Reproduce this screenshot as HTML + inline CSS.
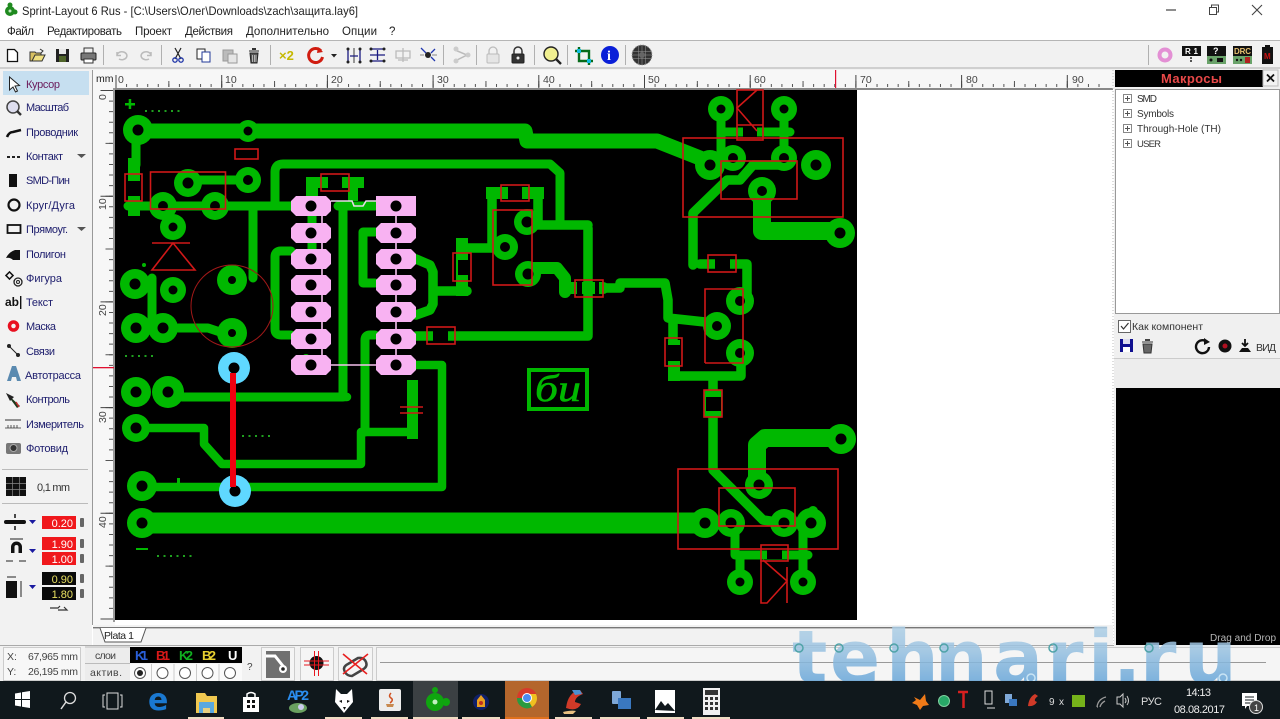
<!DOCTYPE html>
<html><head><meta charset="utf-8"><title>Sprint-Layout 6 Rus</title>
<style>html,body{margin:0;padding:0;background:#fff;width:1280px;height:719px;overflow:hidden}svg{display:block;filter:blur(.3px)}text{font-family:"Liberation Sans","DejaVu Sans",sans-serif}</style></head>
<body>
<svg xmlns="http://www.w3.org/2000/svg" width="1280" height="719" viewBox="0 0 1280 719">
<defs>
<linearGradient id="wm" gradientUnits="userSpaceOnUse" x1="0" y1="620" x2="0" y2="682"><stop offset="0" stop-color="#b4d3e8"/><stop offset=".45" stop-color="#9cc4e2"/><stop offset="1" stop-color="#68a6d8"/></linearGradient>
<path id="pd" d="M-15-10H15L20-5V5L15 10H-15L-20 5V-5Z" fill="#f8b2f2"/>
</defs>
<rect width="1280" height="719" fill="#fff"/>
<!-- title -->
<circle cx="10" cy="11" r="5" fill="#1f8a1f"/><circle cx="10" cy="5" r="2.5" fill="#1f8a1f"/><circle cx="15" cy="12" r="2.5" fill="#1f8a1f"/><circle cx="10" cy="11" r="1.5" fill="#bfe8bf"/>
<text x="22" y="15" font-size="12" fill="#222" textLength="336" lengthAdjust="spacingAndGlyphs">Sprint-Layout 6 Rus - [C:\Users\Олег\Downloads\zach\защита.lay6]</text>
<g font-size="11.5" fill="#222" lengthAdjust="spacingAndGlyphs">
<text x="7" y="35" textLength="27">Файл</text><text x="47" y="35" textLength="75">Редактировать</text><text x="135" y="35" textLength="37">Проект</text><text x="185" y="35" textLength="48">Действия</text><text x="246" y="35" textLength="83">Дополнительно</text><text x="342" y="35" textLength="35">Опции</text><text x="389" y="35">?</text>
</g>
<path d="M1166 10h10" stroke="#444" stroke-width="1.2"/>
<path d="M1209.500 7.500h7v7h-7zM1211.500 7.500v-2.500h7v7h-2" fill="none" stroke="#444"/>
<path d="M1252 5l10 10M1262 5l-10 10" stroke="#444" stroke-width="1.1"/>
<!-- toolbar -->
<rect x="0" y="40" width="1280" height="30" fill="#f1f1f1"/>
<rect x="0" y="40" width="1280" height="1" fill="#b5b5b5"/>
<rect x="0" y="67" width="1280" height="2" fill="#cfcfcf"/>
<g stroke="#b0b0b0"><path d="M103.500 45v20M161.500 45v20M270.500 45v20M443.500 45v20M476.500 45v20M534.500 45v20M567.500 45v20M625.500 45v20M1148.500 45v20"/></g>
<path d="M7.500 49.500h7l3 3v9h-10z" fill="#fff" stroke="#111" stroke-width="1.300"/>
<path d="M30 61v-9h5l1 1h5v8z" fill="#d8c060" stroke="#333"/><path d="M32 61l3-6h10l-3 6z" fill="#f0e080" stroke="#333"/><path d="M40 49l3 2-2 2" fill="none" stroke="#333"/>
<rect x="56" y="49" width="13" height="13" fill="#222"/><rect x="59" y="49" width="7" height="5" fill="#e8e8e8"/><rect x="59" y="56" width="7" height="6" fill="#50652a"/>
<rect x="81" y="53" width="15" height="7" rx="1" fill="#777" stroke="#222"/><rect x="84" y="48" width="9" height="5" fill="#eee" stroke="#333"/><rect x="84" y="59" width="9" height="4" fill="#fff" stroke="#333"/>
<path d="M117 55a5 4 0 1 1 2 4M117 52v3.500h4" fill="none" stroke="#bbb" stroke-width="1.500"/><path d="M151 55a5 4 0 1 0-2 4M151 52v3.500h-4" fill="none" stroke="#bbb" stroke-width="1.500"/>
<path d="M175 48l6 11M181 48l-6 11" stroke="#222" stroke-width="1.200"/><circle cx="175" cy="60" r="2.200" fill="none" stroke="#1f35a8" stroke-width="1.300"/><circle cx="181" cy="60" r="2.200" fill="none" stroke="#1f35a8" stroke-width="1.300"/>
<rect x="197" y="49" width="8" height="10" fill="#fff" stroke="#222"/><rect x="202" y="52" width="8" height="10" fill="#fff" stroke="#223a99"/>
<rect x="223" y="50" width="10" height="11" fill="#bbb" stroke="#999"/><rect x="228" y="54" width="9" height="9" fill="#e5e5e5" stroke="#999"/>
<path d="M249 51h10M250 53h8l-1 10h-6z" fill="#555" stroke="#222"/><rect x="252" y="48" width="4" height="2" fill="#333"/><path d="M252.500 55v7M254.500 55v7M256 55v7" stroke="#ddd" stroke-width=".7"/>
<text x="279" y="60" font-size="13" font-weight="bold" fill="#c5b800">×2</text>
<path d="M321 51a7 7 0 1 0 1.500 6" fill="none" stroke="#d01c10" stroke-width="3"/><path d="M318 47l5 5-6 1z" fill="#d01c10"/>
<path d="M331 54h6l-3 3.500z" fill="#222"/>
<g fill="none" stroke="#1a1a80" stroke-width="1.300"><path d="M354 48v15" stroke="#666"/><path d="M348 50v12M360 50v12M350 56h8"/></g><g fill="#222"><circle cx="348" cy="49" r="1.500"/><circle cx="360" cy="49" r="1.500"/><circle cx="348" cy="62" r="1.500"/><circle cx="360" cy="62" r="1.500"/></g>
<g fill="none" stroke="#1a1a80" stroke-width="1.300"><path d="M370 55h15M372 49h11M372 61h11M377.500 50v10"/></g><g fill="#222"><circle cx="371" cy="49" r="1.500"/><circle cx="384" cy="49" r="1.500"/><circle cx="371" cy="61" r="1.500"/><circle cx="384" cy="61" r="1.500"/></g>
<path d="M396 51h14v7h-14zM398 60h10M403 48v14" fill="none" stroke="#bbb" stroke-width="1.300"/>
<path d="M421 48l5 5M435 49l-4 4M435 61l-4-4" stroke="#2238b0" stroke-width="1.300" fill="none"/><circle cx="428" cy="55" r="3" fill="#222"/><path d="M420 55h4M432 55h5" stroke="#888"/>
<path d="M455 50l12 5-12 6" fill="none" stroke="#bbb" stroke-width="1.500"/><circle cx="456" cy="49" r="2.500" fill="#ccc"/><circle cx="456" cy="61" r="2.500" fill="#ccc"/><circle cx="468" cy="55" r="2.500" fill="#ccc"/>
<rect x="487" y="54" width="12" height="9" rx="1" fill="#e5e5e5" stroke="#bbb"/><path d="M489 54v-3a4 4 0 0 1 8 0v3" fill="none" stroke="#bbb" stroke-width="1.300"/>
<rect x="512" y="54" width="12" height="9" rx="1" fill="#333" stroke="#222"/><path d="M514 54v-3a4 4 0 0 1 8 0v3" fill="none" stroke="#333" stroke-width="1.500"/><circle cx="518" cy="58" r="1.500" fill="#eee"/>
<circle cx="551" cy="54" r="7" fill="#f0ef90" stroke="#222" stroke-width="1.400"/><path d="M556 59l5 5" stroke="#222" stroke-width="2.400"/>
<path d="M579 47v14h14M575 51h14v14" fill="none" stroke="#076b1a" stroke-width="2.400"/><rect x="577" y="49" width="4" height="4" fill="#10bce0"/><rect x="587" y="59" width="4" height="4" fill="#10bce0"/>
<circle cx="610" cy="55" r="9" fill="#0a1fd8"/><text x="607" y="60" font-size="14" font-weight="bold" fill="#fff" style="font-family:'Liberation Serif',serif">i</text>
<circle cx="642" cy="55" r="10" fill="#333"/><circle cx="642" cy="55" r="10" fill="none" stroke="#999" stroke-width="1" stroke-dasharray="1 1.500"/><path d="M632 51.500h20M632 55h20M632 58.500h20M638.500 45v20M642 45v20M645.500 45v20" stroke="#999" stroke-width=".5"/><circle cx="642" cy="55" r="3" fill="#666"/>
<circle cx="1165" cy="55" r="5.500" fill="none" stroke="#e38fd4" stroke-width="4"/>
<rect x="1182" y="46" width="19" height="10" fill="#111"/><text x="1185" y="54" font-size="8" font-weight="bold" fill="#fff" textLength="13">R1</text><circle cx="1191" cy="58" r="1" fill="#222"/><circle cx="1191" cy="61" r="1" fill="#222"/>
<rect x="1207" y="46" width="19" height="18" fill="#111"/><text x="1213" y="54" font-size="9" font-weight="bold" fill="#fff">?</text><rect x="1207" y="56" width="19" height="8" fill="#6aa36a"/><circle cx="1211" cy="60" r="1.500" fill="#111"/><rect x="1217" y="58" width="6" height="4" fill="#111"/>
<rect x="1233" y="46" width="19" height="18" fill="#111"/><text x="1234" y="54" font-size="8" font-weight="bold" fill="#e8c070" textLength="17">DRC</text><rect x="1233" y="56" width="19" height="8" fill="#6aa36a"/><circle cx="1237" cy="60" r="1.200" fill="#111"/><circle cx="1241" cy="60" r="1.200" fill="#111"/><rect x="1245" y="57" width="5" height="6" fill="#b02020"/>
<rect x="1262" y="47" width="11" height="17" fill="#111"/><rect x="1265" y="45" width="5" height="2" fill="#111"/><text x="1264" y="59" font-size="8" font-weight="bold" fill="#c81010">M</text>
<!-- left panel -->
<rect x="0" y="70" width="92" height="576" fill="#f2f2f2"/>
<rect x="3" y="71" width="86" height="24" fill="#c6dff0"/>
<rect x="92" y="70" width="1" height="555" fill="#999"/>
<g font-size="11" fill="#1c1c6c" lengthAdjust="spacingAndGlyphs">
<text x="26" y="88" fill="#6a1a5a" textLength="34">Курсор</text><text x="26" y="111" textLength="43">Масштаб</text><text x="26" y="136" textLength="52">Проводник</text><text x="26" y="160" textLength="37">Контакт</text><text x="26" y="184" textLength="44">SMD-Пин</text><text x="26" y="209" textLength="49">Круг/Дуга</text><text x="26" y="233" textLength="42">Прямоуг.</text><text x="26" y="258" textLength="40">Полигон</text><text x="26" y="282" textLength="36">Фигура</text><text x="26" y="306" textLength="27">Текст</text><text x="26" y="330" textLength="30">Маска</text><text x="26" y="355" textLength="29">Связи</text><text x="25" y="379" textLength="56">Автотрасса</text><text x="26" y="403" textLength="44">Контроль</text><text x="26" y="428" textLength="58">Измеритель</text><text x="26" y="452" textLength="42">Фотовид</text>
</g>
<path d="M9.500 77l0 13 3.500-3 2.500 5 2-1-2.500-5 4.500-.5z" fill="#fff" stroke="#222"/>
<circle cx="13" cy="107" r="6" fill="#dde" stroke="#444" stroke-width="1.500"/><path d="M17 111l4 4" stroke="#333" stroke-width="2.400"/>
<path d="M7 137q2-5 6-5l8-2" fill="none" stroke="#111" stroke-width="2.600"/>
<path d="M7 157h3M12 157h3M17 157h3" stroke="#222" stroke-width="2"/><path d="M77 154h9l-4.500 4z" fill="#555"/>
<rect x="9" y="174" width="8" height="13" fill="#111"/>
<circle cx="14" cy="205" r="5.500" fill="none" stroke="#111" stroke-width="2.200"/>
<rect x="7.500" y="225" width="13" height="8" fill="none" stroke="#111" stroke-width="1.800"/><path d="M77 227h9l-4.500 4z" fill="#555"/>
<path d="M6 258q3-6 9-8h5v10h-7q-3-3-7-2z" fill="#111"/>
<rect x="7" y="273" width="5" height="5" transform="rotate(45 9.500 275.500)" fill="none" stroke="#111" stroke-width="1.500"/><circle cx="18" cy="282" r="4" fill="none" stroke="#222" stroke-width="1.300"/><circle cx="18" cy="282" r="1.500" fill="none" stroke="#222"/>
<text x="5" y="306" font-size="12" font-weight="bold" fill="#111">ab</text><rect x="20" y="296" width="1.400" height="13" fill="#111"/>
<circle cx="13.500" cy="326" r="4" fill="none" stroke="#e81020" stroke-width="3.500"/>
<circle cx="9" cy="346" r="2" fill="#222"/><circle cx="18" cy="355" r="2" fill="#222"/><path d="M9 346l9 9" stroke="#222"/>
<path d="M7 381l5-15h4l5 15h-4l-1-4h-4l-1 4z" fill="#5a8ab0"/>
<path d="M6 393l14 13-3 2z" fill="#1c3a1c"/><path d="M6 393l8 4-4 4z" fill="#222"/><path d="M16 402l3 5" stroke="#c03030" stroke-width="1.500"/>
<path d="M5 420h16" stroke="#333"/><path d="M5 428h16M8 425v3M11 425v3M14 425v3M17 425v3" stroke="#333" stroke-width=".8"/>
<rect x="6" y="443" width="15" height="11" rx="2" fill="#777"/><circle cx="13.500" cy="448" r="3.500" fill="#333" stroke="#aaa"/>
<path d="M2 469.500h86M2 503.500h86" stroke="#bbb"/>
<rect x="6" y="477" width="20" height="19" fill="#111"/><path d="M6 483.500h20M6 489.500h20M12.500 477v19M19.500 477v19" stroke="#888" stroke-width=".7"/>
<text x="37" y="491" font-size="11" fill="#333" textLength="33">0,1 mm</text>
<path d="M6 522h18" stroke="#111" stroke-width="4" stroke-linecap="round"/><path d="M15 514v4M15 526v4" stroke="#111" stroke-width="1.500"/>
<path d="M29 520h7l-3.500 4z M29 549h7l-3.500 4z M29 585h7l-3.500 4z" fill="#1a1aa0"/>
<rect x="42" y="516" width="34" height="13" fill="#f0181c"/><rect x="42" y="537" width="34" height="13" fill="#f0181c"/><rect x="42" y="552" width="34" height="13" fill="#f0181c"/>
<rect x="42" y="572" width="34" height="13" fill="#0a0a0a"/><rect x="42" y="587" width="34" height="13" fill="#0a0a0a"/>
<g font-size="11" text-anchor="end"><text x="73" y="527" fill="#fff">0.20</text><text x="73" y="548" fill="#fff">1.90</text><text x="73" y="563" fill="#fff">1.00</text><text x="73" y="583" fill="#e8e060">0.90</text><text x="73" y="598" fill="#e8e060">1.80</text></g>
<g fill="#666"><rect x="80" y="518" width="4" height="9" rx="1"/><rect x="80" y="539" width="4" height="9" rx="1"/><rect x="80" y="554" width="4" height="9" rx="1"/><rect x="80" y="574" width="4" height="9" rx="1"/><rect x="80" y="589" width="4" height="9" rx="1"/></g>
<path d="M11 543v4a5.500 5.500 0 0 1 11 0v6h-3.500v-6a2 2 0 0 0-4 0v6H11z" fill="#111"/><path d="M10 539h13M6 561h7M19 561h7" stroke="#222"/>
<rect x="6" y="581" width="11" height="17" fill="#111"/><path d="M7 577h9M21 581v16" stroke="#222"/>
<path d="M50 608h8l2-2M58 610h9l-3-3" fill="none" stroke="#333" stroke-width="1.200"/>
<!-- rulers -->
<rect x="93" y="70" width="1022" height="18" fill="#f7f7f7"/>
<rect x="93" y="70" width="22" height="556" fill="#f7f7f7"/>
<rect x="115" y="88" width="998" height="2" fill="#888"/>
<path d="M115.500 85.500H1106" stroke="#555" stroke-width="3" stroke-dasharray="1 9.570"/>
<path d="M115.500 84H1106" stroke="#555" stroke-width="6" stroke-dasharray="1 51.850"/>
<path d="M115.500 81.500H1106" stroke="#444" stroke-width="13" stroke-dasharray="1 104.700"/>
<g font-size="10.500" fill="#444"><text x="96" y="82" fill="#222">mm</text><text x="118" y="83">0</text><text x="225" y="83">10</text><text x="331" y="83">20</text><text x="437" y="83">30</text><text x="543" y="83">40</text><text x="648" y="83">50</text><text x="754" y="83">60</text><text x="860" y="83">70</text><text x="966" y="83">80</text><text x="1072" y="83">90</text></g>
<rect x="835" y="70" width="1.200" height="18" fill="#e01030"/>
<path d="M111 90V620" stroke="#555" stroke-width="4" stroke-dasharray="1 9.570"/>
<path d="M109 90V620" stroke="#555" stroke-width="7" stroke-dasharray="1 51.850"/>
<path d="M107 90V620" stroke="#444" stroke-width="13" stroke-dasharray="1 104.700"/>
<rect x="113" y="88" width="2" height="534" fill="#999"/>
<g font-size="10.500" fill="#444"><text transform="translate(106,100) rotate(-90)">0</text><text transform="translate(106,210) rotate(-90)">10</text><text transform="translate(106,316) rotate(-90)">20</text><text transform="translate(106,423) rotate(-90)">30</text><text transform="translate(106,528) rotate(-90)">40</text></g>
<rect x="93" y="367" width="21" height="1.300" fill="#e01030"/>
<!-- PCB -->
<rect x="115" y="90" width="742" height="530" fill="#000"/>
<g fill="none" stroke="#00b800" stroke-linecap="round" stroke-linejoin="round">
<path d="M138 131H525L527 141H657L700 158L710 165" stroke-width="15"/>
<path d="M138 523H705" stroke-width="21" stroke-linecap="butt"/>
<path d="M136 130V165M128 206H292M188 180H248M253 208V278M275 206V172Q275 164 283 164H550L560 173V221M178 328H208L232 336M152 278V322M135 284H152M136 328H163M312 182V255" stroke-width="9"/>
<path d="M291 251H281Q275 251 275 257V329Q275 335 281 335H291M375 232H363V283H375M375 335H370Q365 335 365 340V432M343 206V397H182M338 206H375" stroke-width="9"/>
<path d="M306 358V365" stroke-width="8"/>
<path d="M416 259L430 265L433 272V304L430 310L416 315M433 291H467M416 336H588M588 228V335M540 225H588M492 192V248H466M538 192V225" stroke-width="9.500"/>
<path d="M148 428H204V444L222 464H361V432H410M416 365H442V487H138M182 397H347" stroke-width="8.500"/>
<path d="M530 268H557L565 278V292M565 288H603" stroke-width="12"/>
<path d="M605 288H620V283H665L668 300V318L705 322M673 322V340M674 376H741V350M713 376V392M713 417V470L763 520L784 523" stroke-width="9.500"/>
<path d="M721 109V160M784 109V158M735 523V555H808M803 523V555M740 555V582M803 555V582M725 132H790" stroke-width="9"/>
<path d="M783 165H753L740 180H727L693 213V265M700 264H747M747 265V296" stroke-width="9.500"/>
<path d="M762 200V231H840M757 480V445L765 438H840" stroke-width="18"/>
</g>
<g fill="#00b800">
<rect x="128" y="158" width="12" height="58"/>
<rect x="306" y="177" width="58" height="11"/><rect x="306" y="177" width="12" height="19"/><rect x="348" y="177" width="10" height="24"/>
<rect x="456" y="238" width="12" height="58"/>
<rect x="486" y="187" width="58" height="12"/>
<rect x="668" y="340" width="12" height="41"/>
<rect x="407" y="380" width="11" height="59"/>
<rect x="704" y="390" width="18" height="27"/>
<rect x="125" y="103" width="10" height="2.500"/><rect x="128.700" y="99" width="2.500" height="10"/>
<rect x="136" y="548" width="12" height="2"/><circle cx="144" cy="265" r="2"/><rect x="177" y="478" width="3" height="6"/>
<circle cx="138" cy="130" r="15"/><circle cx="248" cy="131" r="11"/><circle cx="248" cy="180" r="13"/><circle cx="188" cy="183" r="14"/><circle cx="163" cy="206" r="14"/><circle cx="215" cy="206" r="14"/><circle cx="173" cy="227" r="13"/>
<circle cx="232" cy="280" r="15"/><circle cx="232" cy="333" r="15"/><circle cx="135" cy="284" r="15"/><circle cx="173" cy="290" r="13"/><circle cx="136" cy="328" r="15"/><circle cx="163" cy="328" r="15"/>
<circle cx="136" cy="392" r="15"/><circle cx="168" cy="392" r="16"/><circle cx="136" cy="428" r="14"/><circle cx="142" cy="486" r="15"/><circle cx="142" cy="523" r="15"/>
<circle cx="527" cy="222" r="13"/><circle cx="505" cy="247" r="13"/><circle cx="528" cy="274" r="13"/>
<circle cx="721" cy="109" r="13"/><circle cx="784" cy="109" r="13"/><circle cx="710" cy="165" r="15"/><circle cx="733" cy="158" r="13"/><circle cx="784" cy="158" r="13"/><circle cx="816" cy="165" r="15"/><circle cx="762" cy="191" r="14"/><circle cx="840" cy="233" r="15"/>
<circle cx="740" cy="301" r="14"/><circle cx="717" cy="326" r="14"/><circle cx="740" cy="353" r="14"/>
<circle cx="759" cy="485" r="14"/><circle cx="841" cy="439" r="15"/><circle cx="705" cy="523" r="15"/><circle cx="731" cy="523" r="14"/><circle cx="784" cy="523" r="14"/><circle cx="811" cy="523" r="15"/><circle cx="813" cy="511" r="5"/><circle cx="740" cy="582" r="13"/><circle cx="803" cy="582" r="13"/>
</g>
<!-- dotted markers -->
<g stroke="#1fa01f" stroke-width="2" stroke-dasharray="2 4.500"><path d="M145 111H183M125 356H155M242 436H270M157 556H194"/></g>
<!-- resistor gaps -->
<g fill="#000"><rect x="127" y="181" width="13" height="15"/><rect x="328" y="176" width="14" height="13"/><rect x="458" y="260" width="10" height="15"/><rect x="433" y="328" width="15" height="15"/><rect x="508" y="186" width="14" height="14"/><rect x="715" y="257" width="15" height="15"/><rect x="743" y="125" width="14" height="14"/><rect x="667" y="345" width="14" height="16"/><rect x="706" y="397" width="15" height="14"/><rect x="767" y="547" width="15" height="12"/><rect x="577" y="281" width="5" height="15"/><rect x="595" y="281" width="4" height="15"/></g>
<!-- pink pads -->
<path d="M322 206V365M396 206V365M331 365H376" stroke="#f5c0ee" stroke-width="1.600" fill="none"/>
<path d="M331 201H352L354 206H363L366 201H376" stroke="#e8d8e8" stroke-width="1.600" fill="none"/>
<use href="#pd" x="311" y="206"/><use href="#pd" x="311" y="233"/><use href="#pd" x="311" y="259"/><use href="#pd" x="311" y="285"/><use href="#pd" x="311" y="312"/><use href="#pd" x="311" y="339"/><use href="#pd" x="311" y="365"/>
<rect x="376" y="196" width="40" height="20" fill="#f8b2f2"/><use href="#pd" x="396" y="233"/><use href="#pd" x="396" y="259"/><use href="#pd" x="396" y="285"/><use href="#pd" x="396" y="312"/><use href="#pd" x="396" y="339"/><use href="#pd" x="396" y="365"/>
<!-- cyan pads -->
<circle cx="234" cy="368" r="16" fill="#5fd8ff"/><circle cx="235" cy="491" r="16" fill="#5fd8ff"/>
<!-- holes -->
<g fill="#000">
<circle cx="138" cy="130" r="5.500"/><circle cx="248" cy="131" r="4.500"/><circle cx="248" cy="180" r="5"/><circle cx="188" cy="183" r="5.500"/><circle cx="163" cy="206" r="5"/><circle cx="215" cy="206" r="5"/><circle cx="173" cy="227" r="4.500"/>
<circle cx="232" cy="280" r="4"/><circle cx="232" cy="333" r="4"/><circle cx="135" cy="284" r="5.500"/><circle cx="173" cy="290" r="4.500"/><circle cx="136" cy="328" r="5.500"/><circle cx="163" cy="328" r="5.500"/>
<circle cx="136" cy="392" r="5.500"/><circle cx="168" cy="392" r="5.500"/><circle cx="136" cy="428" r="5.500"/><circle cx="142" cy="486" r="5.500"/><circle cx="142" cy="523" r="5.500"/>
<circle cx="527" cy="222" r="5.500"/><circle cx="505" cy="247" r="5"/><circle cx="528" cy="274" r="5.500"/>
<circle cx="721" cy="109" r="4.500"/><circle cx="784" cy="109" r="4.500"/><circle cx="710" cy="165" r="5.500"/><circle cx="733" cy="158" r="5"/><circle cx="784" cy="158" r="5"/><circle cx="816" cy="165" r="5.500"/><circle cx="762" cy="191" r="5"/><circle cx="840" cy="233" r="5.500"/>
<circle cx="740" cy="301" r="5"/><circle cx="717" cy="326" r="5"/><circle cx="740" cy="353" r="5"/>
<circle cx="759" cy="485" r="5.500"/><circle cx="841" cy="439" r="5.500"/><circle cx="705" cy="523" r="5.500"/><circle cx="731" cy="523" r="5.500"/><circle cx="784" cy="523" r="5.500"/><circle cx="811" cy="523" r="5.500"/><circle cx="740" cy="582" r="4.500"/><circle cx="803" cy="582" r="4.500"/>
<circle cx="311" cy="206" r="5.500"/><circle cx="311" cy="233" r="5.500"/><circle cx="311" cy="259" r="5.500"/><circle cx="311" cy="285" r="5.500"/><circle cx="311" cy="312" r="5.500"/><circle cx="311" cy="339" r="5.500"/><circle cx="311" cy="365" r="5.500"/>
<circle cx="396" cy="206" r="5.500"/><circle cx="396" cy="233" r="5.500"/><circle cx="396" cy="259" r="5.500"/><circle cx="396" cy="285" r="5.500"/><circle cx="396" cy="312" r="5.500"/><circle cx="396" cy="339" r="5.500"/><circle cx="396" cy="365" r="5.500"/>
<circle cx="234" cy="368" r="5.500"/><circle cx="235" cy="491" r="5.500"/>
</g>
<rect x="230" y="373" width="6" height="114" fill="#f00010"/>
<!-- logo -->
<rect x="529" y="370" width="58" height="39" fill="none" stroke="#00b800" stroke-width="4"/>
<text x="535" y="401" font-size="38" font-style="italic" fill="#00b800" stroke="#00b800" stroke-width=".6" textLength="46" lengthAdjust="spacingAndGlyphs" style="font-family:'Liberation Serif',serif">би</text>
<!-- red silk -->
<g fill="none" stroke="#d01818" stroke-width="1.600">
<rect x="235" y="149" width="23" height="10"/><rect x="125" y="174" width="17" height="27"/><rect x="150.500" y="172" width="75" height="37"/>
<path d="M152 243H190M173 243L195 270H152Z"/>
<rect x="321" y="174" width="28" height="17"/><rect x="453" y="253" width="18" height="28"/><rect x="427" y="327" width="28" height="17"/>
<rect x="501" y="185" width="28" height="16"/><rect x="493" y="210" width="39" height="75"/><rect x="575" y="280" width="28" height="17"/>
<rect x="737" y="90" width="26" height="50"/><path d="M737 125H763M757 90L737 108L757 131"/>
<rect x="683" y="138" width="160" height="79"/><rect x="721" y="161" width="76" height="38"/>
<rect x="708" y="255" width="28" height="17"/><path d="M705 363V289H743V363H705"/><rect x="665" y="338" width="17" height="28"/><rect x="704" y="390" width="18" height="27"/>
<rect x="678" y="469" width="160" height="80"/><rect x="719" y="488" width="76" height="38"/><rect x="761" y="545" width="27" height="16"/>
<path d="M763 560L787 581L767 603H761V560M787 567V603"/>
<path d="M400 407H423M400 413H423"/>
</g>
<circle cx="232" cy="306" r="41" fill="none" stroke="#a01818" stroke-width="1"/>
<!-- grip -->
<path d="M1113 70V645" stroke="#bbb" stroke-dasharray="1 2"/>
<!-- right panel -->
<rect x="1114" y="70" width="166" height="576" fill="#f0f0f0"/>
<rect x="1115" y="70" width="148" height="17" fill="#000"/>
<text x="1161" y="83" font-size="13" font-weight="bold" fill="#e84848" textLength="61">Макросы</text>
<rect x="1263" y="70" width="15" height="16" fill="#f2f2f2" stroke="#bbb"/><path d="M1267 74.500l7 7M1274 74.500l-7 7" stroke="#111" stroke-width="1.800"/>
<rect x="1115.500" y="89.500" width="164" height="224" fill="#fff" stroke="#999"/>
<g font-size="10" fill="#333" lengthAdjust="spacingAndGlyphs"><text x="1137" y="102" textLength="20">SMD</text><text x="1137" y="117" textLength="37">Symbols</text><text x="1137" y="132" textLength="84">Through-Hole (TH)</text><text x="1137" y="147" font-size="9.500" textLength="24">USER</text></g>
<g fill="#fff" stroke="#888"><rect x="1123.500" y="94.500" width="8" height="8"/><rect x="1123.500" y="109.500" width="8" height="8"/><rect x="1123.500" y="124.500" width="8" height="8"/><rect x="1123.500" y="139.500" width="8" height="8"/></g>
<path d="M1125 98.500h5M1127.500 96v5M1125 113.500h5M1127.500 111v5M1125 128.500h5M1127.500 126v5M1125 143.500h5M1127.500 141v5" stroke="#555"/>
<rect x="1118.500" y="320.500" width="12" height="12" fill="#fff" stroke="#666"/><path d="M1121 326l2.500 3 5-6" fill="none" stroke="#333" stroke-width="1.200"/>
<text x="1132" y="330" font-size="10.500" fill="#333" textLength="71">Как компонент</text>
<rect x="1120" y="339" width="13" height="13" fill="#101090"/><rect x="1123" y="339" width="7" height="5" fill="#dde"/><rect x="1123" y="347" width="7" height="5" fill="#fff"/>
<path d="M1142 342h11M1143 344h9l-1 9h-7z" fill="#666" stroke="#333"/><rect x="1145" y="339" width="5" height="2" fill="#444"/>
<path d="M1207 342a6.500 6.500 0 1 0 2 5" fill="none" stroke="#111" stroke-width="2.400"/><path d="M1204 338l6 4-6 3z" fill="#111"/>
<circle cx="1225" cy="346" r="6.500" fill="#111"/><circle cx="1225" cy="346" r="2.500" fill="#b01020"/>
<path d="M1245 339v6M1242 343l3 3 3-3" stroke="#111" stroke-width="1.800" fill="none"/><path d="M1239 352l3-4h6l3 4z" fill="#111"/>
<text x="1256" y="351" font-size="10.500" fill="#333" textLength="20">ВИД</text>
<rect x="1114" y="358" width="166" height="30" fill="#ededed"/><rect x="1114" y="358" width="166" height="1" fill="#ccc"/>
<rect x="1116" y="388" width="164" height="257" fill="#000"/>
<text x="1210" y="641" font-size="10" fill="#b5b5b5" textLength="66">Drag and Drop</text>
<!-- tab row & status -->
<rect x="93" y="625" width="1020" height="21" fill="#f2f2f2"/>
<rect x="93" y="627" width="1014" height="1.400" fill="#777"/>
<path d="M100 628L105 642H141L146 628" fill="#fff" stroke="#555"/>
<text x="104" y="639" font-size="10.500" fill="#222" textLength="30">Plata 1</text>
<rect x="0" y="646" width="1280" height="35" fill="#f2f2f2"/>
<rect x="0" y="645" width="1114" height="1" fill="#aaa"/>
<rect x="3.500" y="647.500" width="77" height="33" fill="#f7f7f7" stroke="#ccc"/>
<g font-size="10.500" fill="#444"><text x="7" y="660">X:</text><text x="7" y="675">Y:</text><text x="28" y="660" textLength="50">67,965 mm</text><text x="28" y="675" textLength="50">26,195 mm</text></g>
<rect x="85" y="647" width="45" height="16" fill="#ececec"/><rect x="85" y="664" width="45" height="17" fill="#ececec"/><path d="M85 663.500h45M85 647h45" stroke="#bbb"/>
<text x="95" y="659" font-size="10.500" fill="#444" textLength="21">слои</text><text x="90" y="676" font-size="10.500" fill="#444" textLength="32">актив.</text>
<rect x="130" y="647" width="112" height="16" fill="#000"/>
<g font-size="13" font-weight="bold" lengthAdjust="spacingAndGlyphs"><text x="135" y="660" fill="#2a5fd8" textLength="13">K1</text><text x="156" y="660" fill="#d81818" textLength="14">B1</text><text x="179" y="660" fill="#10b020" textLength="14">K2</text><text x="202" y="660" fill="#e8d030" textLength="14">B2</text><text x="228" y="660" fill="#fff" textLength="8">U</text></g>
<rect x="130" y="664" width="112" height="17" fill="#fafafa"/>
<g fill="#fff" stroke="#555"><circle cx="140" cy="673" r="5.500"/><circle cx="162.500" cy="673" r="5.500"/><circle cx="185" cy="673" r="5.500"/><circle cx="207.500" cy="673" r="5.500"/><circle cx="230" cy="673" r="5.500"/></g>
<circle cx="140" cy="673" r="3" fill="#222"/>
<path d="M151.500 664v17M174 664v17M196.500 664v17M219 664v17" stroke="#ccc"/>
<text x="247" y="670" font-size="10" fill="#444">?</text>
<g fill="#f5f5f5" stroke="#ccc"><rect x="261.500" y="647.500" width="33" height="33"/><rect x="300.500" y="647.500" width="33" height="33"/><rect x="338.500" y="647.500" width="34" height="33"/><rect x="376.500" y="647.500" width="904" height="33"/></g>
<rect x="266" y="651" width="24" height="27" fill="#707070"/><path d="M266 656h9l8 10" fill="none" stroke="#fff" stroke-width="3"/><circle cx="283" cy="669" r="4" fill="#fff"/><circle cx="283" cy="669" r="1.800" fill="#222"/>
<circle cx="316.500" cy="663" r="7" fill="#111"/><path d="M304 661h25M304 665h25M314.500 651v25M318.500 651v25" stroke="#e81820" stroke-width="1"/>
<path d="M345 672q-3-5 3-8l10-6q6-1 8 4t-4 8l-10 6q-5 0-7-4z" fill="none" stroke="#444" stroke-width="2.500"/><path d="M343 654l24 20M368 654l-25 20" stroke="#e82020" stroke-width="1.600"/>
<path d="M380 662.500H1266" stroke="#999"/>
<!-- watermark -->
<g fill="url(#wm)" opacity=".85" font-weight="bold" font-size="74" lengthAdjust="spacingAndGlyphs">
<text style="font-family:'DejaVu Sans',sans-serif" x="792" y="683" textLength="33">t</text>
<text style="font-family:'DejaVu Sans',sans-serif" x="830" y="683" textLength="52">e</text>
<text style="font-family:'DejaVu Sans',sans-serif" x="886" y="683" textLength="48">h</text>
<text style="font-family:'DejaVu Sans',sans-serif" x="935" y="683" textLength="53">n</text>
<text style="font-family:'DejaVu Sans',sans-serif" x="993" y="683" textLength="52">a</text>
<text style="font-family:'DejaVu Sans',sans-serif" x="1047" y="683" textLength="38">r</text>
<text style="font-family:'DejaVu Sans',sans-serif" x="1088" y="683" textLength="20">i</text>
<text style="font-family:'DejaVu Sans',sans-serif" x="1113" y="683" textLength="24">.</text>
<text style="font-family:'DejaVu Sans',sans-serif" x="1140" y="683" textLength="38">r</text>
<text style="font-family:'DejaVu Sans',sans-serif" x="1184" y="683" textLength="50">u</text>
</g>
<g fill="none" stroke="#4fa3a8" stroke-width="1.500"><circle cx="799" cy="648" r="4"/><circle cx="839" cy="648" r="4"/><circle cx="894" cy="648" r="4"/><circle cx="944" cy="648" r="4"/><circle cx="1053" cy="648" r="4"/><circle cx="1149" cy="648" r="4"/></g>
<g fill="none" stroke="#c8e4f4" stroke-width="1.500"><circle cx="1031" cy="678" r="4"/><circle cx="1223" cy="678" r="4"/></g>
<!-- taskbar -->
<rect x="0" y="681" width="1280" height="38" fill="#10181c"/>
<rect x="413" y="681" width="45" height="36" fill="#3b4043"/>
<rect x="505" y="681" width="44" height="36" fill="#b4662c"/>
<g fill="#eedcc2"><rect x="188" y="717" width="36" height="2"/><rect x="325" y="717" width="37" height="2"/><rect x="371" y="717" width="37" height="2"/><rect x="413" y="717" width="45" height="2"/><rect x="462" y="717" width="38" height="2"/><rect x="555" y="717" width="37" height="2"/><rect x="600" y="717" width="40" height="2"/><rect x="647" y="717" width="37" height="2"/><rect x="692" y="717" width="38" height="2"/></g>
<rect x="505" y="717" width="44" height="2" fill="#e0701c"/>
<g fill="#fff"><path d="M15 693.500l6-1v6.500h-6zM22 692.300l8-1.300v8h-8zM15 700h6v6.500l-6-1zM22 700h8v8l-8-1.300z"/></g>
<circle cx="70" cy="698" r="5.500" fill="none" stroke="#ddd" stroke-width="1.300"/><path d="M66 702l-5 7" stroke="#ddd" stroke-width="1.500"/>
<rect x="107" y="693" width="11" height="16" fill="none" stroke="#ddd"/><path d="M105 695h-2v12h2M120 695h2v12h-2" fill="none" stroke="#ddd"/>
<text x="148" y="710" font-size="30" font-weight="bold" fill="#1a78d0" style="font-family:'DejaVu Sans',sans-serif">e</text>
<path d="M196 693h9l2 3h10v17h-21z" fill="#f0c850"/><rect x="199" y="702" width="15" height="11" fill="#5aa8e0"/><rect x="203" y="708" width="7" height="5" fill="#e8d080"/>
<path d="M243 697h16v15h-16z" fill="#fff"/><path d="M247 697v-3q4-3 8 0v3" fill="none" stroke="#fff" stroke-width="1.500"/><path d="M247 700h3v3h-3zM252 700h3v3h-3zM247 705h3v3h-3zM252 705h3v3h-3z" fill="#111"/>
<text x="287" y="700" font-size="14" font-weight="bold" fill="#2a8ef0" textLength="22">AP2</text><ellipse cx="298" cy="708" rx="9" ry="5" fill="#6aa060"/><circle cx="301" cy="707" r="3" fill="#cce"/>
<path d="M336 689l5 5h6l5-5 1 13-9 11-9-11z" fill="#fff"/><path d="M339 701l3 2v-3zM350 701l-3 2v-3z" fill="#111"/><path d="M343 707h3l-1.500 3z" fill="#111"/>
<rect x="379" y="689" width="22" height="22" rx="2" fill="#ededed"/><path d="M386 704h8l-1 3h-6z" fill="#c88a50"/><path d="M391 693q-3 3 0 5t-1 5" fill="none" stroke="#d05020" stroke-width="1.500"/>
<circle cx="435" cy="702" r="9" fill="#0fa50f"/><circle cx="435" cy="690" r="3" fill="#0fa50f"/><circle cx="446" cy="702" r="4" fill="#0fa50f"/><circle cx="435" cy="702" r="2.500" fill="#bff0bf"/>
<circle cx="481" cy="702" r="8" fill="#10206a"/><path d="M477 707v-7l4-5 4 5v7z" fill="#e8a020"/><circle cx="481" cy="703" r="2" fill="#c03020"/>
<circle cx="527" cy="698" r="10" fill="#d83a2a"/><path d="M517 698a10 10 0 0 0 15 9l-5-9z" fill="#2a9a40"/><path d="M527 698l5 9a10 10 0 0 0 4-13h-9z" fill="#f0c020"/><circle cx="527" cy="698" r="4.500" fill="#4a8af0" stroke="#fff"/>
<path d="M566 708q2-16 14-18l3 4q-8 3-8 8l6 2q-4 8-15 4z" fill="#d03a28"/><path d="M563 712q8-2 13-1l-3 3h-9z" fill="#e8c080"/><path d="M572 690l8 0 2 4-7 1z" fill="#4a90d0"/>
<rect x="612" y="691" width="9" height="13" rx="1" fill="#7ea8d8"/><rect x="618" y="698" width="13" height="11" fill="#3a78c0"/>
<rect x="655" y="690" width="20" height="23" fill="#fff"/><path d="M655 710l6-9 4 5 3-3 7 8z" fill="#10181c"/>
<rect x="703" y="688" width="17" height="27" fill="#f0f0f0"/><rect x="705" y="690" width="13" height="5" fill="#333"/><g fill="#333"><rect x="705" y="697" width="3" height="3"/><rect x="710" y="697" width="3" height="3"/><rect x="715" y="697" width="3" height="3"/><rect x="705" y="702" width="3" height="3"/><rect x="710" y="702" width="3" height="3"/><rect x="715" y="702" width="3" height="3"/><rect x="705" y="707" width="3" height="3"/><rect x="710" y="707" width="3" height="3"/><rect x="715" y="707" width="3" height="3"/></g>
<path d="M914 697l6 3 5-6 1 7 3 4-6 1-3 4-3-5-5-2 4-3z" fill="#f07a18"/>
<circle cx="944" cy="701" r="5.500" fill="#28a868" stroke="#80d0a0"/>
<path d="M958 692h10M963.500 692v16" stroke="#d82020" stroke-width="2.500"/>
<rect x="985" y="691" width="7" height="13" fill="none" stroke="#ddd"/><path d="M987 708h8" stroke="#ddd"/>
<rect x="1005" y="694" width="7" height="9" fill="#7ea8d8"/><rect x="1009" y="699" width="8" height="7" fill="#3a78c0"/>
<path d="M1028 706q1-9 7-12l3 2q-4 3-3 5l2 1q-3 5-9 4z" fill="#d03a28"/>
<text x="1049" y="705" font-size="10" fill="#ddd" textLength="15">9x</text>
<rect x="1072" y="695" width="13" height="12" fill="#76b21a"/>
<path d="M1097 707q1-8 9-10M1100 707q1-4 5-6M1097 707h1" fill="none" stroke="#999" stroke-width="1.300"/>
<path d="M1117 697h3l3-3v13l-3-3h-3zM1125 698q2 3 0 5M1127 696q3 5 0 9" fill="none" stroke="#ccc"/>
<text x="1141" y="705" font-size="11" fill="#ddd" textLength="21">РУС</text>
<text x="1186" y="696" font-size="11" fill="#eee" textLength="25">14:13</text>
<text x="1174" y="713" font-size="11" fill="#eee" textLength="51">08.08.2017</text>
<path d="M1242 693h15v13h-10l-2 3v-3h-3z" fill="#fff"/><path d="M1245 697h9M1245 700h9M1245 703h6" stroke="#10181c"/>
<circle cx="1256" cy="707" r="6.500" fill="#444" stroke="#ddd"/><text x="1254" y="711" font-size="9" fill="#fff">1</text>
</svg>
</body></html>
